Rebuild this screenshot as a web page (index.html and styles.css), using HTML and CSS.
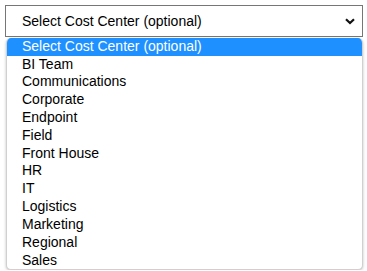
FILE: index.html
```html
<!DOCTYPE html>
<html>
<head>
<meta charset="utf-8">
<link rel="stylesheet" href="styles.css">
</head>
<body>
<div class="page">
  <div class="select">
    <span class="value">Select Cost Center (optional)</span>
    <svg class="chev" width="10" height="7" viewBox="0 0 10 7"><path d="M1 1.2 L5 5 L9 1.2" fill="none" stroke="#111" stroke-width="2.2"/></svg>
  </div>
  <ul class="list">
    <li class="opt selected">Select Cost Center (optional)</li>
    <li class="opt">BI Team</li>
    <li class="opt">Communications</li>
    <li class="opt">Corporate</li>
    <li class="opt">Endpoint</li>
    <li class="opt">Field</li>
    <li class="opt">Front House</li>
    <li class="opt">HR</li>
    <li class="opt">IT</li>
    <li class="opt">Logistics</li>
    <li class="opt">Marketing</li>
    <li class="opt">Regional</li>
    <li class="opt">Sales</li>
  </ul>
</div>
</body>
</html>
```
FILE: styles.css
```css
html, body {
  margin: 0;
  padding: 0;
  background: #fff;
}
.page {
  padding: 5px 4px 0 5px;
  font-family: "Liberation Sans", Arial, sans-serif;
  font-size: 14px;
  color: #000;
}
.select {
  box-sizing: border-box;
  height: 32px;
  border: 1px solid #767676;
  display: flex;
  align-items: center;
  justify-content: space-between;
  padding: 0 7px 0 16px;
}
.value {
  line-height: 16px;
}
.chev {
  display: block;
}
.list {
  list-style: none;
  margin: 0.7px 0 0 1px;
  padding: 0;
  box-sizing: border-box;
  border: 1px solid #d0d0d0;
  border-top: none;
  border-radius: 5px;
  box-shadow: 0 1px 3px rgba(0,0,0,0.25);
  overflow: hidden;
  background: #fff;
}
.opt {
  height: 17.83px;
  line-height: 17.83px;
  padding-left: 15px;
  white-space: nowrap;
}
.selected {
  background: #1e90ff;
  color: #fff;
}
```
